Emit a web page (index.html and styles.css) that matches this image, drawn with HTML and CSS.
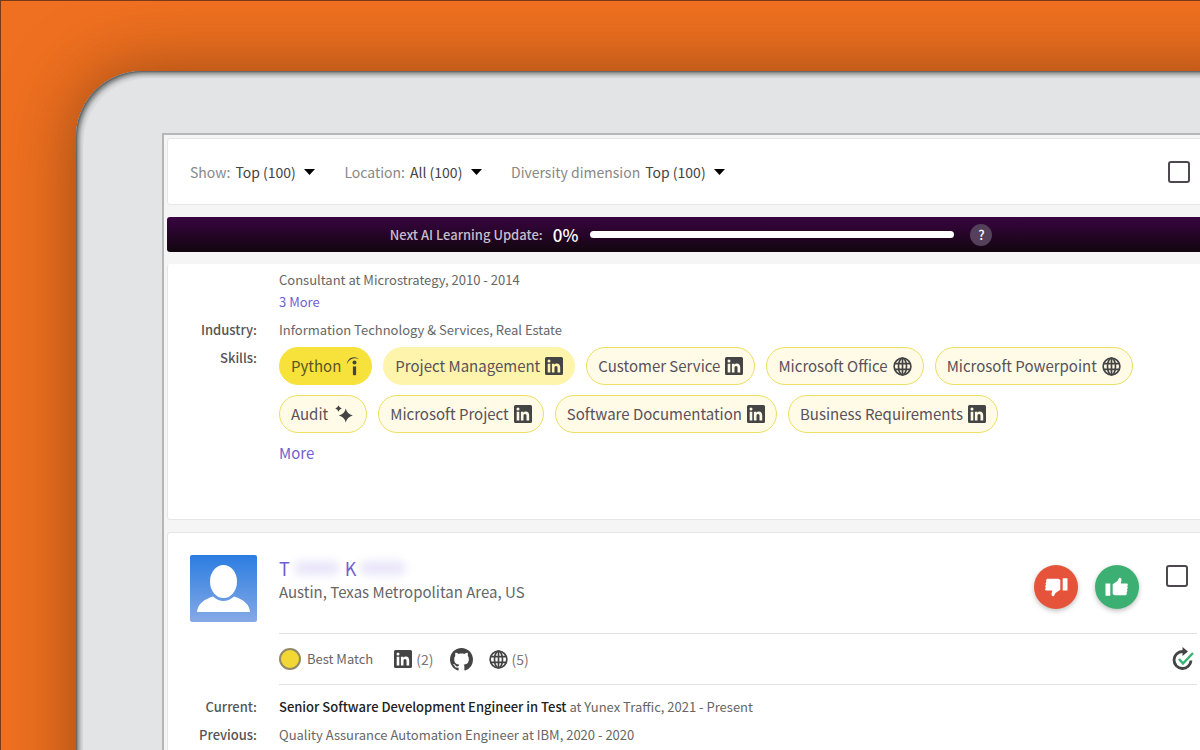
FILE: index.html
```
<!DOCTYPE html>
<html lang="en">
<head>
<meta charset="utf-8">
<title>Candidates</title>
<link rel="stylesheet" href="styles.css">
</head>
<body>
<svg class="sprite" aria-hidden="true">
  <symbol id="linkedin" viewBox="0 0 18 18"><path fill="currentColor" fill-rule="evenodd" d="M1.500 0h15A1.500 1.500 0 0 1 18 1.500v15a1.500 1.500 0 0 1-1.500 1.500h-15A1.500 1.500 0 0 1 0 16.500v-15A1.500 1.500 0 0 1 1.500 0zM2.700 6.800v8.600h2.600V6.800zM4 2.600a1.500 1.500 0 1 0 0 3 1.500 1.500 0 0 0 0-3zM6.900 6.800v8.600h2.600v-4.500c0-1.200.5-1.900 1.500-1.900s1.500.7 1.500 1.900v4.500h2.700v-5c0-2.500-1.300-3.800-3.200-3.800-1.200 0-2 .5-2.500 1.300V6.800z"/></symbol>
  <symbol id="globe" viewBox="0 0 20 20"><g fill="none" stroke="currentColor" stroke-width="1.800"><circle cx="10" cy="10" r="8.800"/><ellipse cx="10" cy="10" rx="4.200" ry="8.800"/><path d="M10 1v18M1.800 6.900h16.400M1.800 13.100h16.400"/></g></symbol>
  <symbol id="indeed" viewBox="0 0 14 20"><path fill="currentColor" d="M.8 8.500C1.500 2 7.500-.8 13 3.200 8 .9 3 3 .8 8.500z"/><circle cx="8.500" cy="6.600" r="2" fill="currentColor"/><path fill="currentColor" d="M6.900 10.200q1.600.7 3.200 0v8.600q-1.600 1-3.200 0z"/></symbol>
  <symbol id="sparkle" viewBox="0 0 18 18"><path fill="currentColor" d="M10.800 3.500q1.300 5.700 7 7-5.700 1.300-7 7-1.300-5.700-7-7 5.700-1.300 7-7zM3.500.3q.7 2.500 3.200 3.200-2.500.7-3.200 3.200Q2.800 4.200.3 3.500 2.800 2.800 3.500.3z"/></symbol>
  <symbol id="github" viewBox="0 0 16 16"><path fill="currentColor" d="M8 0C3.580 0 0 3.580 0 8c0 3.540 2.290 6.530 5.470 7.590.4.070.55-.17.55-.38 0-.19-.01-.82-.01-1.490-2.010.37-2.530-.49-2.690-.94-.09-.23-.48-.94-.82-1.130-.28-.15-.68-.52-.01-.53.63-.01 1.080.58 1.230.82.72 1.210 1.870.87 2.330.66.070-.52.280-.87.510-1.070-1.780-.2-3.640-.89-3.640-3.950 0-.87.310-1.590.820-2.150-.08-.2-.36-1.020.080-2.120 0 0 .67-.21 2.200.82.64-.18 1.320-.27 2-.27s1.360.090 2 .270c1.530-1.040 2.200-.82 2.200-.82.440 1.100.160 1.920.080 2.120.51.560.820 1.270.820 2.150 0 3.070-1.870 3.750-3.650 3.950.29.250.540.730.540 1.480 0 1.070-.01 1.930-.01 2.200 0 .210.150.460.550.380A8.010 8.010 0 0 0 16 8c0-4.420-3.580-8-8-8z"/></symbol>
  <symbol id="caret" viewBox="0 0 11 6"><path fill="#000" d="M0 0h11L5.500 6z"/></symbol>
  <symbol id="thumb" viewBox="0 0 24 20"><path fill="currentColor" d="M.5 6.500h4.800v12.300H.5zM7.700 7.300 12.500 4 14.200.8q2.600-.6 2.300 2.400l-.8 3.200h6.600q1.300 1.400-.1 2.900 1.500 1.500-.2 3 1.200 1.500-.4 2.900 1 1.600-.6 3H9.500l-1.800-1.100z"/></symbol>
</svg>
<div class="tablet">
  <main class="screen">
    <form class="card filters">
      <label class="filter">Show:
        <select><option>Top (100)</option></select>
        <svg class="caret"><use href="#caret"/></svg>
      </label>
      <label class="filter">Location:
        <select><option>All (100)</option></select>
        <svg class="caret"><use href="#caret"/></svg>
      </label>
      <label class="filter">Diversity dimension
        <select><option>Top (100)</option></select>
        <svg class="caret"><use href="#caret"/></svg>
      </label>
      <input class="check push" type="checkbox" aria-label="Select all candidates">
    </form>

    <section class="banner">
      <span class="banner-label">Next AI Learning Update:</span>
      <span class="banner-value">0%</span>
      <div class="track" role="progressbar" aria-valuenow="0" aria-label="Next AI Learning Update"></div>
      <button class="help" type="button">?</button>
    </section>

    <article class="card first">
      <dl class="facts">
        <dt></dt>
        <dd><p>Consultant at Microstrategy, 2010 - 2014</p><a href="#">3 More</a></dd>
        <dt>Industry:</dt>
        <dd>Information Technology &amp; Services, Real Estate</dd>
        <dt>Skills:</dt>
        <dd>
          <ul class="chips">
            <li class="chip strong">Python <svg class="indeed"><use href="#indeed"/></svg></li>
            <li class="chip medium">Project Management <svg><use href="#linkedin"/></svg></li>
            <li class="chip">Customer Service <svg><use href="#linkedin"/></svg></li>
            <li class="chip">Microsoft Office <svg class="globe"><use href="#globe"/></svg></li>
            <li class="chip">Microsoft Powerpoint <svg class="globe"><use href="#globe"/></svg></li>
            <li class="chip">Audit <svg class="sparkle"><use href="#sparkle"/></svg></li>
            <li class="chip">Microsoft Project <svg><use href="#linkedin"/></svg></li>
            <li class="chip">Software Documentation <svg><use href="#linkedin"/></svg></li>
            <li class="chip">Business Requirements <svg><use href="#linkedin"/></svg></li>
          </ul>
          <a class="more" href="#">More</a>
        </dd>
      </dl>
    </article>

    <article class="card second">
      <header class="person">
        <svg class="avatar" viewBox="0 0 67 67" role="img" aria-label="Profile picture">
          <defs><linearGradient id="sky" x2="0" y2="1"><stop stop-color="#2b7de1"/><stop offset="1" stop-color="#86a9e6"/></linearGradient></defs>
          <rect width="67" height="67" rx="2" fill="url(#sky)"/>
          <ellipse cx="33.500" cy="26.500" rx="13.500" ry="16.500" fill="#fff"/>
          <path fill="#fff" d="M7 57q1-11 16-15.500 10.500 9 21 0Q59 46 60 57z"/>
        </svg>
        <div class="identity">
          <div class="who">
            <h2 class="name"><a href="#">T</a><span class="smudge"></span><a href="#">K</a><span class="smudge"></span></h2>
            <p class="place">Austin, Texas Metropolitan Area, US</p>
          </div>
          <button class="vote down" type="button" aria-label="Reject"><svg><use href="#thumb"/></svg></button>
          <button class="vote up" type="button" aria-label="Approve"><svg><use href="#thumb"/></svg></button>
          <input class="check" type="checkbox" aria-label="Select candidate">
        </div>
      </header>
      <div class="sources">
        <span class="dot"></span><span class="match">Best Match</span>
        <a class="source" href="#"><svg><use href="#linkedin"/></svg>(2)</a>
        <a class="source" href="#" aria-label="GitHub"><svg class="github"><use href="#github"/></svg></a>
        <a class="source" href="#"><svg class="globe"><use href="#globe"/></svg>(5)</a>
        <svg class="refresh" viewBox="0 0 22 24"><path fill="none" stroke="#444" stroke-width="2.800" d="M12 4.500H10.500A8.500 8.500 0 1 0 19 13.500"/><path fill="#444" d="M10.500 0 16 4.500 10.500 9z"/><path fill="none" stroke="#35b373" stroke-width="2.400" d="m7 12 4 4.500L21 6"/></svg>
      </div>
      <dl class="facts">
        <dt>Current:</dt>
        <dd><b>Senior Software Development Engineer in Test</b> at Yunex Traffic, 2021 - Present</dd>
        <dt>Previous:</dt>
        <dd>Quality Assurance Automation Engineer at IBM, 2020 - 2020</dd>
      </dl>
    </article>
  </main>
</div>
</body>
</html>
```
FILE: styles.css
```
* { box-sizing: border-box; }
body, p, h2, dl, dd, ul { margin: 0; padding: 0; }
body {
  display: flex;
  height: 100vh;
  overflow: hidden;
  padding: 70px 0 0 75px;
  border: solid #7a3a17;
  border-width: 1px 0 0 1px;
  background: #ef7020;
  color: #666;
  font: 13px/22px "Noto Sans CJK SC", "Noto Sans", sans-serif;
}
a { color: #6f5fd0; text-decoration: none; }
.sprite { display: none; }

/* The device runs past the right edge of the window. */
.tablet {
  flex: 1;
  min-width: 0;
  margin: 0 -80px -80px 0;
  padding: 62px 62px 0 86px;
  border-radius: 66px 0 0 0;
  background: #e2e4e6;
  box-shadow: inset 1px 1px 1px #666, inset 3px 3px 4px #777, inset 7px 7px 1px #dadcdd, 0 0 70px rgba(80, 40, 10, .55);
  overflow: hidden;
}
.screen {
  display: flex;
  flex-direction: column;
  gap: 12px;
  min-height: 100%;
  padding: 3px 0 0 3px;
  border: solid #b4b6b8;
  border-width: 2px 0 0 2px;
  background: #f5f5f5;
}
.card {
  padding: 0 20px 0 22px;
  border: 1px solid #e6e6e6;
  border-radius: 3px;
  background: #fff;
}

.filters { display: flex; align-items: center; gap: 29px; height: 67px; }
.filter { display: flex; align-items: center; gap: 5px; color: #888; font-size: 14px; }
.filter select {
  appearance: none;
  padding: 0;
  border: 0;
  background: none;
  color: #444;
  font: inherit;
}
.caret { width: 11px; height: 6px; margin-left: 3px; }
.check {
  appearance: none;
  flex: none;
  width: 22px;
  height: 22px;
  margin: 0;
  border: 2px solid #4d484d;
  border-radius: 3px;
  background: #fff;
}
.push { margin: 0 7px 0 auto; }

.banner {
  display: flex;
  align-items: center;
  justify-content: center;
  height: 35px;
  padding-right: 3px;
  border-radius: 3px;
  background: linear-gradient(#380440, #12060f);
  color: #fff;
}
.banner-label { color: #c9bccb; font-weight: 500; }
.banner-value { margin: 0 12px 0 10px; font-size: 17px; font-weight: 500; }
.track { flex: 0 1 364px; height: 7px; border-radius: 4px; background: #fff; }
.help {
  width: 22px;
  height: 22px;
  margin-left: 16px;
  padding: 0;
  border: 0;
  border-radius: 50%;
  background: #54405a;
  color: #fff;
  font: 500 13px/22px "Noto Sans CJK SC", sans-serif;
}

.first { padding-top: 4px; padding-bottom: 54px; border-top-color: #fff; }
.facts { display: grid; grid-template-columns: 67px 1fr; gap: 6px 22px; }
.facts dt { font-weight: 500; text-align: right; color: #555; }
.facts b { color: #222; font-weight: 500; }
.chips { display: flex; flex-wrap: wrap; gap: 10px 11px; list-style: none; }
.chip {
  display: flex;
  align-items: center;
  gap: 5px;
  height: 38px;
  padding: 0 11px;
  border: 1px solid #ecdf62;
  border-radius: 19px;
  background: #fffbe6;
  color: #59515c;
  font-size: 15px;
}
.chip svg, .source svg { width: 18px; height: 18px; color: #444; }
.chip .globe, .source .globe { width: 19px; height: 19px; }
.chip .indeed { width: 14px; height: 20px; }
.chip .sparkle { margin: 0 2px; }
.strong { border-color: #f7e23b; background: #f7e23b; color: #5c5423; }
.medium { border-color: #fef4ac; background: #fef4ac; }
.more { display: inline-block; margin-top: 9px; font-size: 15px; }

.second { flex: 1; padding-top: 22px; }
.person { display: flex; gap: 22px; }
.avatar { flex: none; width: 67px; height: 67px; }
.identity { display: flex; flex: 1; align-items: flex-start; height: 79px; border-bottom: 1px solid #e2e2e2; }
.who { flex: 1; }
.name { display: flex; align-items: center; height: 26px; font-size: 18px; font-weight: 400; }
.smudge { width: 46px; height: 14px; margin: 0 5px 0 4px; border-radius: 7px; background: #e9e5f9; filter: blur(5px); }
.place { font-size: 15px; }
.vote {
  display: grid;
  place-items: center;
  width: 44px;
  height: 44px;
  margin: 10px 17px 0 0;
  padding: 0;
  border: 0;
  border-radius: 50%;
  color: #fff;
  box-shadow: 0 2px 5px rgba(0, 0, 0, .25);
}
.vote svg { width: 24px; height: 20px; }
.down { background: #e5533a; }
.down svg { transform: rotate(180deg); }
.up { margin-right: 27px; background: #3cb073; }
.identity .check { margin: 10px 9px 0 0; }
.sources {
  display: flex;
  align-items: center;
  height: 51px;
  margin: 0 0 11px 89px;
  border-bottom: 1px solid #e2e2e2;
}
.dot { width: 22px; height: 22px; margin-right: 6px; border: 2px solid #918a68; border-radius: 50%; background: #f3d735; }
.match { margin-right: 5px; }
.source { display: flex; align-items: center; gap: 4px; margin-left: 16px; color: #777; font-size: 14px; }
.source .github { width: 23px; height: 23px; }
.refresh { width: 22px; height: 24px; margin: 0 3px 0 auto; }
```
